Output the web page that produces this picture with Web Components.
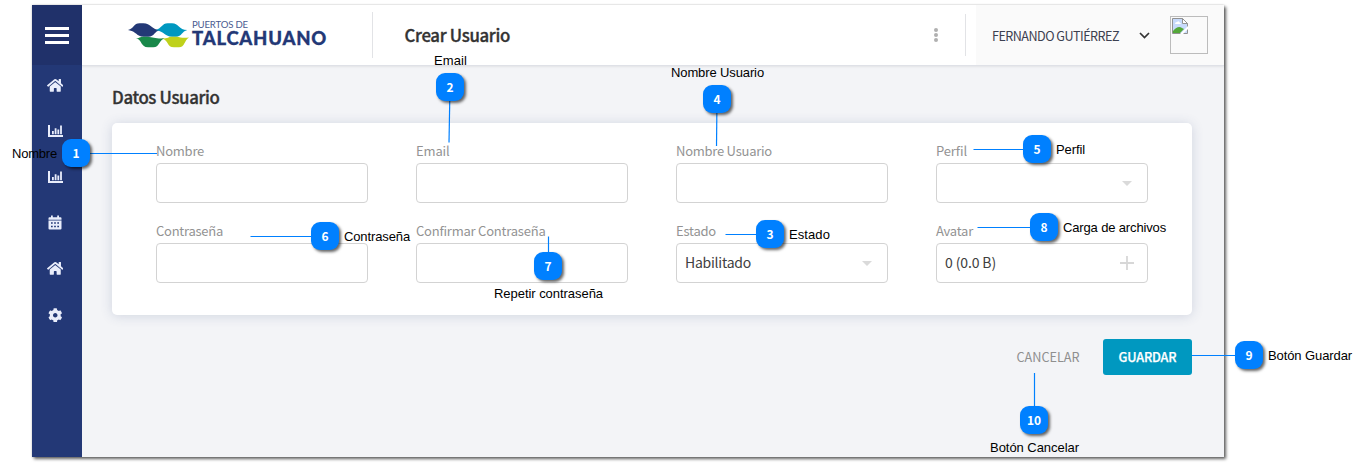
<!DOCTYPE html>
<html lang="es">
<head>
<meta charset="utf-8">
<title>Crear Usuario</title>
<style>
html,body{margin:0;height:471px;overflow:hidden;background:#fff}
body{position:relative;font-family:"Noto Sans CJK SC","Noto Sans",sans-serif;color:#333}
</style>
</head>
<body>
<app-window></app-window>
<call-out n="1" x="76" y="153" to="157,153" lx="12" ly="153" w="45">Nombre</call-out>
<call-out n="2" x="450" y="87" to="449,142.5" lx="434" ly="60" w="33">Email</call-out>
<call-out n="4" x="717" y="99" to="716.5,146" lx="671" ly="72" w="93">Nombre Usuario</call-out>
<call-out n="5" x="1037" y="149" to="973.5,149" lx="1056" ly="149" w="29">Perfil</call-out>
<call-out n="6" x="325" y="236" to="250.5,236" lx="344" ly="236" w="66">Contraseña</call-out>
<call-out n="3" x="770" y="234" to="725.5,234" lx="789" ly="234" w="41">Estado</call-out>
<call-out n="8" x="1044" y="227" to="977.5,227" lx="1063" ly="227" w="103">Carga de archivos</call-out>
<call-out n="7" x="548" y="266" to="548,236.5" lx="494" ly="293" w="109">Repetir contraseña</call-out>
<call-out n="9" x="1249" y="355" to="1192,355" lx="1268" ly="355" w="84">Botón Guardar</call-out>
<call-out n="10" x="1034" y="420" to="1034,373" lx="990" ly="447" w="89">Botón Cancelar</call-out>
<script>
const define=(name,html,setup)=>customElements.define(name,class extends HTMLElement{
  connectedCallback(){
    if(this.shadowRoot)return;
    const t=document.createElement('template');
    t.innerHTML=typeof html==='function'?html(this):html;
    this.attachShadow({mode:'open'}).append(t.content.cloneNode(true));
    if(setup)setup(this,this.shadowRoot);
  }
});

/* One line of text, tracked to fill the width in its "w" attribute. */
define('fit-text','<style>:host{display:inline-block;white-space:nowrap}span{display:inline-block}</style><span></span>',(el,root)=>{
  const s=root.querySelector('span');
  s.textContent=el.getAttribute('text');
  const w=+el.getAttribute('w');
  const d=(w-s.getBoundingClientRect().width)/s.textContent.length;
  s.style.letterSpacing=d.toFixed(3)+'px';
});

const bars='<path d="M1 1v11h14" fill="none" stroke="currentColor" stroke-width="2"/><path d="M4 7h1.800v3.200H4zM6.700 4.300h1.800v5.900H6.700zM9.400 5.500h1.800v4.700H9.400zM12.100 1.500h1.800v8.700h-1.800z" fill="currentColor"/>';
const home='<path fill="currentColor" d="M280.37 148.26L96 300.11V464a16 16 0 0 0 16 16l112.06-.29a16 16 0 0 0 15.92-16V368a16 16 0 0 1 16-16h64a16 16 0 0 1 16 16v95.64a16 16 0 0 0 16 16.05L464 480a16 16 0 0 0 16-16V300L295.67 148.26a12.19 12.19 0 0 0-15.3 0zM571.6 251.47L488 182.56V44.05a12 12 0 0 0-12-12h-56a12 12 0 0 0-12 12v72.61L318.47 43a48 48 0 0 0-61 0L4.34 251.47a12 12 0 0 0-1.6 16.9l25.5 31A12 12 0 0 0 45.15 301l235.22-193.74a12.19 12.19 0 0 1 15.3 0L530.9 301a12 12 0 0 0 16.9-1.6l25.5-31a12 12 0 0 0-1.7-16.93z"/>';
const icons={
  home:['0 0 576 512',16.5,14.7,home],
  chart:['0 0 15 13',15,13,bars],
  calendar:['0 0 14 15',14,15,'<path fill="currentColor" fill-rule="evenodd" d="M3 .5h1.800v1.700h4.400V.5H11v1.700h1.500q1 0 1 1V4.700H.5V3.200q0-1 1-1H3zM.5 5.600h13v7.900q0 1-1 1h-11q-1 0-1-1zM3 7.200v1.600h1.700V7.200zM6.150 7.200v1.600h1.700V7.200zM9.300 7.200v1.600H11V7.200zM3 10.700v1.600h1.700v-1.600zM6.150 10.700v1.600h1.700v-1.600zM9.300 10.700v1.600H11v-1.600z"/>'],
  cog:['0 0 512 512',14.5,14.5,'<path fill="currentColor" d="M487.4 315.7l-42.6-24.6c4.3-23.2 4.3-47 0-70.2l42.6-24.6c4.9-2.8 7.1-8.6 5.5-14-11.1-35.6-30-67.8-54.7-94.6-3.8-4.1-10-5.1-14.8-2.3L380.8 110c-17.9-15.4-38.5-27.3-60.8-35.1V25.8c0-5.6-3.9-10.5-9.4-11.7-36.7-8.2-74.3-7.8-109.2 0-5.5 1.2-9.4 6.1-9.4 11.7V75c-22.2 7.9-42.8 19.8-60.8 35.1L88.7 85.5c-4.9-2.8-11-1.9-14.8 2.3-24.7 26.7-43.6 58.9-54.7 94.6-1.7 5.4.6 11.2 5.5 14L67.3 221c-4.3 23.2-4.3 47 0 70.2l-42.6 24.6c-4.9 2.8-7.1 8.6-5.5 14 11.1 35.6 30 67.8 54.7 94.6 3.8 4.1 10 5.1 14.8 2.3l42.6-24.6c17.9 15.4 38.5 27.3 60.8 35.1v49.2c0 5.6 3.9 10.5 9.4 11.7 36.7 8.2 74.3 7.8 109.2 0 5.5-1.2 9.4-6.1 9.4-11.7v-49.2c22.2-7.9 42.8-19.8 60.8-35.1l42.6 24.6c4.9 2.8 11 1.9 14.8-2.3 24.7-26.7 43.6-58.9 54.7-94.6 1.5-5.5-.7-11.3-5.6-14.1zM256 336c-44.1 0-80-35.9-80-80s35.9-80 80-80 80 35.9 80 80-35.9 80-80 80z"/>'],
  caret:['0 0 10 5',10,5,'<path fill="currentColor" d="M0 0h10L5 5z"/>'],
  plus:['0 0 14 14',14,14,'<path stroke="currentColor" stroke-width="1.800" d="M7 0v14M0 7h14"/>']
};
define('ui-icon',el=>{const [vb,w,h,body]=icons[el.getAttribute('name')];
  return `<style>:host{display:flex;flex:none}</style><svg viewBox="${vb}" width="${w}" height="${h}">${body}</svg>`});

define('side-nav',`<style>
:host{display:flex;flex-direction:column;width:50px;background:#233876;color:#e9edfb}
.menu{height:60px;background:#20316a;display:flex;flex-direction:column;gap:4px;align-items:center;justify-content:center}
.menu i{width:24px;height:3px;background:#fff}
.item{height:46.300px;display:flex;align-items:center;justify-content:center;padding-right:4px}
.item:first-child{height:40px}
.item:nth-child(2){height:50px}
.item:nth-child(3){height:43px}
.item:nth-child(4){height:49px}
.item:nth-child(5){height:43px}
.item:nth-child(6){height:50px}
</style><div class="menu"><i></i><i></i><i></i></div><nav>
<div class="item"><ui-icon name="home"></ui-icon></div><div class="item"><ui-icon name="chart"></ui-icon></div>
<div class="item"><ui-icon name="chart"></ui-icon></div><div class="item"><ui-icon name="calendar"></ui-icon></div>
<div class="item"><ui-icon name="home"></ui-icon></div><div class="item"><ui-icon name="cog"></ui-icon></div></nav>`);

define('brand-logo',`<style>
:host{display:flex;width:291px;height:46px;align-items:center;border-right:1px solid #e2e3e6;box-sizing:border-box;padding-left:46px;gap:3px}
svg{flex:none}
.words{color:#233876;display:flex;flex-direction:column;margin-top:-5px}
.a{font:9.600px/10px Lato,sans-serif;color:#4a5b91}
.b{font:900 18.500px/15px Lato,sans-serif;margin-top:1px;-webkit-text-stroke:.3px #233876}
</style><svg width="61" height="25" viewBox="384 63 183 75">
<path fill="#233876" d="M384 84C403 80 400 64 419 64H430C452 64 455 84 481 84C462 88 464 104 445 104H431C409 104 410 88 384 84z"/>
<path fill="#0098c0" d="M467 84C486 79 486 64 503 64H516C536 64 536 84 562 84C545 88 546 104 528 104H516C495 104 494 89 467 84z"/>
<path fill="#19884a" d="M408 109C421 107 422 104 432 104H442C462 105 466 111 494 109C476 115 479 136 460 136H444C422 136 427 114 408 109z"/>
<path fill="#bfd11b" d="M487 110C504 109 506 104 516 104H528C544 105 546 110 568 106C552 115 555 136 537 136H522C500 136 506 114 487 110z"/>
</svg><div class="words"><fit-text class="a" w="56" text="PUERTOS DE"></fit-text><fit-text class="b" w="135" text="TALCAHUANO"></fit-text></div>`);

define('user-menu',`<style>
:host{display:flex;width:248px;height:60px;background:#fafafa;align-items:center;box-sizing:border-box;padding:0 16px;font-size:12.600px;color:#3c4050}
.chev{margin-left:19px}
.avatar{box-sizing:border-box;width:38px;height:38px;border:1px solid #bcbcbc;margin-left:19px;padding:1px}
</style><fit-text w="127" text="FERNANDO GUTIÉRREZ"></fit-text>
<svg class="chev" width="13" height="9" viewBox="0 0 13 9"><path d="M2 2l4.500 4.500L11 2" fill="none" stroke="#333" stroke-width="1.700"/></svg>
<div class="avatar"><svg width="16" height="16" viewBox="0 0 16 16"><path fill="#c7dafb" stroke="#929292" d="M.5.5h10l5 5v10H.5z"/><path d="M3 6q0-2 2-2q2-2 3 1q1 0 1 1z" fill="#fff"/><path fill="#55a83a" d="M1 15v-2q5-6 9-3l2 1-4 4z"/><path fill="#fff" d="M8 16l8-8v3l-5 5z"/><path fill="#fff" stroke="#929292" d="M10.5.5v5h5z"/></svg></div>`);

define('top-bar',`<style>
:host{display:flex;height:61px;background:#fff;align-items:center;border-bottom:1px solid #dfe1e7;box-sizing:border-box;box-shadow:0 1px 2px #00000012}
.title{font-size:16.800px;font-weight:500;margin-left:31.500px;color:#333;-webkit-text-stroke:.35px #333}
.tools{margin-left:auto;width:41px;height:42px;border-right:1px solid #e2e3e6;margin-right:10px;box-sizing:border-box;display:flex;flex-direction:column;gap:1px;justify-content:center;padding-left:9px}
.tools i{width:4px;height:4px;border-radius:50%;background:#b0b0b0}
</style><brand-logo></brand-logo><fit-text class="title" w="105.500" text="Crear Usuario"></fit-text>
<div class="tools"><i></i><i></i><i></i></div><user-menu></user-menu>`);

define('form-field',el=>`<style>
:host{display:flex;flex-direction:column;width:212px}
.label{font-size:13px;line-height:20px;height:22px;color:#939393}
.label fit-text{display:block}
.box{box-sizing:border-box;height:40px;border:1px solid #d3d3d3;border-radius:4px;background:#fff;display:flex;align-items:center;justify-content:space-between;padding:0 ${el.getAttribute('icon')==='plus'?13:15}px 0 8px;font-size:14px;color:#404040}
.box fit-text{margin-top:-2px}
ui-icon{color:${el.getAttribute('icon')==='plus'?'#d7d7d7':'#dadada'};margin-left:auto}
</style><div class="label"><fit-text w="${el.getAttribute('lw')}" text="${el.getAttribute('label')}"></fit-text></div>
<div class="box">${el.hasAttribute('value')?`<fit-text w="${el.getAttribute('vw')}" text="${el.getAttribute('value')}"></fit-text>`:''}${el.hasAttribute('icon')?`<ui-icon name="${el.getAttribute('icon')}"></ui-icon>`:''}</div>`);

define('form-card',`<style>
:host{display:grid;grid-template-columns:repeat(4,212px);gap:18px 48px;box-sizing:border-box;height:192px;padding:18px 44px 32px;background:#fff;border-radius:5px;box-shadow:0 1px 12px #3c508030;align-content:start}
</style><slot></slot>`);

define('action-button',el=>{const p=el.hasAttribute('primary');return `<style>
:host{display:flex;height:36px;align-items:center;justify-content:center;width:${p?89:110}px;font-size:12.700px;border-radius:3px;${p?'background:#0098c0;color:#fff;font-weight:500;-webkit-text-stroke:.25px #fff':'color:#8f8f8f'}}
fit-text{margin-top:-1px}
</style><fit-text w="${p?58:63}" text="${el.getAttribute('text')}"></fit-text>`});

define('user-form',`<style>
:host{display:flex;flex-direction:column;padding:0 32px 0 30px}
h1{margin:0;height:57px;box-sizing:border-box;display:flex;align-items:center;font-size:16.800px;font-weight:500;color:#333;line-height:24px;-webkit-text-stroke:.35px #333}
h1 fit-text{margin-top:4px}
.actions{display:flex;justify-content:flex-end;margin-top:24px}
</style><h1><fit-text w="107.500" text="Datos Usuario"></fit-text></h1>
<form-card>
<form-field label="Nombre" lw="48"></form-field><form-field label="Email" lw="33.500"></form-field>
<form-field label="Nombre Usuario" lw="96"></form-field><form-field label="Perfil" lw="31" icon="caret"></form-field>
<form-field label="Contraseña" lw="67"></form-field><form-field label="Confirmar Contraseña" lw="129.500"></form-field>
<form-field label="Estado" lw="40" value="Habilitado" vw="66" icon="caret"></form-field><form-field label="Avatar" lw="37" value="0 (0.0 B)" vw="51" icon="plus"></form-field>
</form-card><div class="actions"><action-button text="CANCELAR"></action-button><action-button primary text="GUARDAR"></action-button></div>`);

define('app-window',`<style>
:host{display:grid;grid-template-columns:50px 1fr;width:1192px;height:452px;margin:0 0 0 32px;background:#f3f4f7;box-shadow:2px 2px 3px #0000009c,0 0 2px #00000030;position:relative;top:5px}
main{display:flex;flex-direction:column}
</style><side-nav></side-nav><main><top-bar></top-bar><user-form></user-form></main>`);

/* Numbered marker with a leader line and caption, placed freely over the window. */
define('call-out',el=>{const g=k=>+el.getAttribute(k),[tx,ty]=el.getAttribute('to').split(',').map(Number),x=g('x'),y=g('y');
const snap=(a,b)=>a===b?Math.floor(a)+.5:a;
return `<style>
:host{position:absolute;inset:0;pointer-events:none}
svg{position:absolute;left:0;top:0}
b{position:absolute;left:${x-14}px;top:${y-14}px;width:28px;height:28px;border-radius:9px;background:#0080ff;color:#fff;font:bold 12px/27px "Noto Sans CJK SC",sans-serif;text-align:center;box-shadow:2px 2px 3px #0009}
fit-text{position:absolute;left:${g('lx')}px;top:${g('ly')-7}px;font:13px/16px "Liberation Sans",sans-serif;color:#000}
</style><svg width="1368" height="471"><line x1="${snap(x,tx)}" y1="${snap(y,ty)}" x2="${snap(tx,x)}" y2="${snap(ty,y)}" stroke="#0080ff" stroke-width="1.200"/></svg><b>${el.getAttribute('n')}</b><fit-text w="${g('w')}" text="${el.textContent}"></fit-text>`});
</script>
</body>
</html>
